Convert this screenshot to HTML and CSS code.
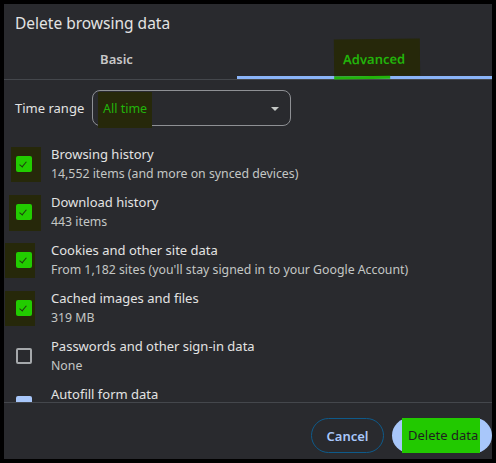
FILE: index.html
```html
<!DOCTYPE html>
<html>
<head>
	<title>Delete browsing data</title>
	<meta name="viewport" content="width=device-width,initial-scale=1.0" />
	<link rel="stylesheet" href="styles.css">
</head>
<body>
	<div class="dialog">
		<div class="title">Delete browsing data</div>
		<div class="tabs">
			<div class="tab tab-basic">Basic</div>
			<div class="tab tab-adv active"><span class="mark">Advanced</span></div>
		</div>
		<div class="body">
			<div class="range">
				<div class="range-label">Time range</div>
				<div class="select">
					<span class="mark sel-mark">All time</span>
					<span class="arrow"></span>
				</div>
			</div>

			<div class="item">
				<div class="box-wrap hl hl1"><div class="box on"></div></div>
				<div class="text">
					<div class="name">Browsing history</div>
					<div class="sub">14,552 items (and more on synced devices)</div>
				</div>
			</div>
			<div class="item">
				<div class="box-wrap hl hl2"><div class="box on"></div></div>
				<div class="text">
					<div class="name">Download history</div>
					<div class="sub">443 items</div>
				</div>
			</div>
			<div class="item">
				<div class="box-wrap hl hl3"><div class="box on"></div></div>
				<div class="text">
					<div class="name">Cookies and other site data</div>
					<div class="sub">From 1,182 sites (you'll stay signed in to your Google Account)</div>
				</div>
			</div>
			<div class="item">
				<div class="box-wrap hl hl3"><div class="box on"></div></div>
				<div class="text">
					<div class="name">Cached images and files</div>
					<div class="sub">319 MB</div>
				</div>
			</div>
			<div class="item">
				<div class="box-wrap"><div class="box off"></div></div>
				<div class="text">
					<div class="name">Passwords and other sign-in data</div>
					<div class="sub">None</div>
				</div>
			</div>
			<div class="item">
				<div class="box-wrap"><div class="box blue"></div></div>
				<div class="text">
					<div class="name">Autofill form data</div>
					<div class="sub">&nbsp;</div>
				</div>
			</div>
		</div>
		<div class="footer">
			<div class="btn cancel">Cancel</div>
			<div class="btn delete"><span class="del-mark">Delete data</span></div>
		</div>
	</div>
</body>
</html>
```

FILE: styles.css
```css
body {
	margin: 0;
	padding: 0;
	background-color: #000000;
	font-family: "Noto Sans", "Open Sans", sans-serif;
}
.dialog {
	margin: 4px;
	width: 488px;
	height: 455px;
	background-color: #292a2e;
	display: flex;
	flex-direction: column;
	overflow: hidden;
	color: #e3e3e3;
}
.title {
	font-size: 15.5px;
	line-height: 20px;
	padding: 9px 0 0 11px;
	height: 27px;
}
.tabs {
	display: flex;
	height: 39px;
	border-bottom: 1px solid #44474c;
}
.tab {
	font-size: 13px;
	font-weight: 600;
	color: #c8c8c8;
	display: flex;
	align-items: center;
	justify-content: center;
	box-sizing: border-box;
}
.tab-basic {
	width: 233px;
	padding-right: 8px;
	padding-bottom: 1px;
}
.tab-adv {
	flex: 1;
	border-bottom: 3px solid #8ab4f8;
	justify-content: flex-start;
	padding-left: 97px;
	align-items: stretch;
}
.mark {
	background-color: #26280a;
	color: #22b40a;
}
.tab-adv .mark {
	position: relative;
	display: flex;
	align-items: center;
	padding: 2px 15px 0 9px;
	margin-top: -1px;
	transform: rotate(-0.6deg);
}
.tab-adv .mark:after {
	content: "";
	position: absolute;
	left: 0;
	bottom: -3px;
	width: 56px;
	height: 3px;
	background-color: #22b40a;
}
.body {
	height: 322px;
	overflow: hidden;
	border-bottom: 1px solid #44474c;
}
.range {
	display: flex;
	align-items: center;
	padding: 10px 0 0 11px;
}
.range-label {
	font-size: 13px;
	color: #e3e3e3;
	width: 77px;
}
.select {
	position: relative;
	width: 199px;
	height: 36px;
	box-sizing: border-box;
	border: 1px solid #8e9094;
	border-radius: 8px;
	display: flex;
	align-items: center;
}
.sel-mark {
	font-size: 12.5px;
	margin-left: 5px;
	margin-top: 3px;
	padding: 9px 5px 11px 5px;
	line-height: 16px;
}
.arrow {
	position: absolute;
	right: 11px;
	top: 16px;
	border-left: 4px solid transparent;
	border-right: 4px solid transparent;
	border-top: 4px solid #c4c7c5;
}
.item {
	display: flex;
	height: 48px;
	align-items: center;
}
.range + .item {
	margin-top: 14px;
}
.box-wrap {
	width: 47px;
	height: 35px;
	display: flex;
	align-items: center;
	box-sizing: border-box;
	padding-left: 12px;
}
.hl {
	position: relative;
}
.hl:before {
	content: "";
	position: absolute;
	top: 0;
	height: 35px;
	width: 30px;
	background-color: #26280a;
}
.hl1:before { left: 7px; }
.hl2:before { left: 5px; width: 32px; height: 36px; }
.hl3:before { left: 1px; }
.box {
	position: relative;
	width: 16px;
	height: 16px;
	border-radius: 2px;
	box-sizing: border-box;
}
.box.on {
	background-color: #22cc00;
}
.box.on:after {
	content: "";
	position: absolute;
	left: 5px;
	top: 4px;
	width: 3px;
	height: 6px;
	border-right: 1.5px solid #1e3a10;
	border-bottom: 1.5px solid #1e3a10;
	transform: rotate(40deg);
}
.box.off {
	border: 2px solid #a5a8ab;
}
.box.blue {
	background-color: #a8c7fa;
}
.text {
	line-height: 19px;
}
.name {
	font-size: 13px;
	color: #e3e3e3;
}
.sub {
	font-size: 12.3px;
	color: #c4c7c5;
	line-height: 20px;
}
.footer {
	flex: 1;
	display: flex;
	justify-content: flex-end;
	align-items: flex-start;
	padding-top: 15px;
}
.btn {
	height: 35px;
	box-sizing: border-box;
	border-radius: 18px;
	font-size: 13px;
	display: flex;
	align-items: center;
	justify-content: center;
}
.cancel {
	width: 73px;
	border: 1px solid #0e5a8a;
	color: #a8c7fa;
	font-weight: 600;
	margin-right: 8px;
}
.delete {
	width: 100px;
	background-color: #a8c7fa;
	color: #1f1f1f;
	justify-content: flex-start;
	padding-left: 10px;
}
.del-mark {
	background-color: #22c900;
	height: 35px;
	line-height: 35px;
	padding: 0 2px 0 6px;
}
```
